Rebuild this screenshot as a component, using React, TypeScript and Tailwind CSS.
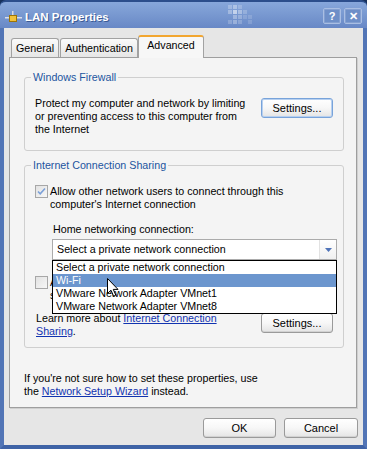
import React from 'react';

const FONT = "font-['Liberation_Sans',Arial,sans-serif]";

function TitleIcon() {
  return (
    <svg width="17" height="12" viewBox="0 0 17 12" className="shrink-0">
      <rect x="7" y="0" width="1.5" height="6" fill="#D5DBE6" />
      <rect x="0" y="6" width="17" height="1.5" fill="#D9DEE8" />
      <rect x="4.5" y="4.5" width="7" height="6" fill="#F2C23A" stroke="#9C7407" strokeWidth="1" />
    </svg>
  );
}

function Watermark() {
  const cells: [number, number, number][] = [
    [0, 0, 0.25], [1, 0, 0.35], [2, 0, 0.2],
    [0, 1, 0.3], [1, 1, 0.55], [2, 1, 0.35], [3, 1, 0.2],
    [1, 2, 0.3], [2, 2, 0.25], [3, 2, 0.15], [4, 2, 0.15],
    [0, 3, 0.2], [1, 3, 0.3], [2, 3, 0.2], [4, 3, 0.15],
  ];
  return (
    <svg width="25" height="20" viewBox="0 0 25 20" className="shrink-0">
      {cells.map(([cx, cy, o], i) => (
        <rect key={i} x={cx * 5} y={cy * 5} width="4" height="4" fill="#ffffff" opacity={o} />
      ))}
    </svg>
  );
}

function CaptionButton({ children }: { children: React.ReactNode }) {
  return (
    <div className="w-[18px] h-[16px] rounded-[2px] border border-[#A9BEE3] bg-[#6E8FC8] flex items-center justify-center text-white font-bold text-[11px] leading-none shadow-[inset_0_0_0_1px_rgba(255,255,255,0.15)]">
      {children}
    </div>
  );
}

function Btn({ children, className = '', focused = false }: { children: React.ReactNode; className?: string; focused?: boolean }) {
  return (
    <div
      className={`h-[20px] shrink-0 rounded-[3px] border bg-linear-to-b from-white via-[#F7F7F7] to-[#E4E4E4] flex items-center justify-center text-black text-[11px] leading-[13px] ${
        focused ? 'border-[#78A3DA] shadow-[inset_0_0_0_1px_#B7D0F0]' : 'border-[#9A9A9A] shadow-[inset_0_-1px_0_#D2D2D2]'
      } ${className}`}
    >
      {children}
    </div>
  );
}

function Check({ checked = false }: { checked?: boolean }) {
  return (
    <div className="w-[13px] h-[13px] shrink-0 border border-[#A7A7A7] bg-linear-to-br from-[#E2E2E2] to-[#F7F7F7] flex items-center justify-center">
      {checked && (
        <svg width="9" height="9" viewBox="0 0 9 9">
          <path d="M1 4.5 L3.2 6.8 L8 1.5" stroke="#7BA0D8" strokeWidth="1.6" fill="none" />
        </svg>
      )}
    </div>
  );
}

function Link({ children }: { children: React.ReactNode }) {
  return <span className="text-[#1133B0] underline">{children}</span>;
}

export default function App() {
  return (
    <div className={`${FONT} w-[367px] h-[449px] overflow-hidden bg-[#16305C] text-black text-[10.7px] leading-[13px]`}>
      {/* Title bar */}
      <div className="h-[28px] rounded-t-[6px] border-t-[2px] border-[#2C4E8C] bg-linear-to-b from-[#87A7DB] via-[#7898D0] to-[#6888C6] flex items-start pl-[5px] pr-[5px]">
        <div className="mt-[9px]">
          <TitleIcon />
        </div>
        <div className="ml-[3px] pt-[8px] text-white font-bold text-[11.5px] leading-[14px] [text-shadow:1px_1px_0_#3A5A95]">
          LAN Properties
        </div>
        <div className="ml-auto mt-[3px] mr-[70px]">
          <Watermark />
        </div>
        <div className="mt-[6px] flex gap-[3px]">
          <CaptionButton>?</CaptionButton>
          <CaptionButton>✕</CaptionButton>
        </div>
      </div>

      {/* Client area */}
      <div className="h-[421px] bg-[#E6E6E6] border-x-[4px] border-b-[4px] border-x-[#5275B6] border-b-[#3F63A6]">
        {/* Tabs */}
        <div className="h-[29px] pt-[7px] pl-[7px] flex items-end relative z-10">
          <div className="w-[48px] h-[19px] rounded-t-[3px] border border-b-0 border-[#A2A2A2] bg-linear-to-b from-[#FAFAFA] to-[#E6E6E6] flex items-center justify-center">
            General
          </div>
          <div className="ml-[1px] w-[78px] h-[19px] rounded-t-[3px] border border-b-0 border-[#A2A2A2] bg-linear-to-b from-[#FAFAFA] to-[#E6E6E6] flex items-center justify-center">
            Authentication
          </div>
          <div className="w-[66px] h-[23px] -mb-[1px] rounded-t-[3px] border border-b-0 border-[#A2A2A2] border-t-2 border-t-[#F2A630] bg-[#F7F7F7] flex items-start justify-center pt-[2px]">
            Advanced
          </div>
        </div>

        {/* Panel */}
        <div className="ml-[5px] w-[348px] h-[351px] border border-[#9E9E9E] bg-[#F4F4F4] shadow-[1px_1px_0_#CFCFCF]">
          <fieldset className="ml-[14px] mt-[13px] w-[320px] rounded-[3px] border border-[#CFCFCF] pb-[14px]">
            <legend className="ml-[6px] px-[2px] text-[#23549F]">Windows Firewall</legend>
            <div className="mt-[13px] pl-[10px] flex items-start">
              <div className="w-[226px] whitespace-nowrap">
                Protect my computer and network by limiting
                <br />
                or preventing access to this computer from
                <br />
                the Internet
              </div>
              <Btn focused className="w-[72px] mt-[1px]">Settings...</Btn>
            </div>
          </fieldset>

          <fieldset className="ml-[14px] mt-[8px] w-[320px] rounded-[3px] border border-[#CFCFCF] pb-[9px]">
            <legend className="ml-[6px] px-[2px] text-[#23549F]">Internet Connection Sharing</legend>
            <div className="mt-[13px] pl-[10px] flex items-start gap-[2px]">
              <Check checked />
              <div className="whitespace-nowrap">
                Allow other network users to connect through this
                <br />
                computer's Internet connection
              </div>
            </div>
            <div className="mt-[12px] pl-[28px]">Home networking connection:</div>
            <div className="relative z-20 mt-[3px] ml-[27px] w-[285px] h-[21px] border border-[#ABABAB] bg-white flex items-center">
              <div className="flex-1 pl-[4px] whitespace-nowrap">Select a private network connection</div>
              <div className="w-[17px] h-full border-l border-[#E2E2E2] bg-linear-to-b from-white to-[#F0F0F0] flex items-center justify-center">
                <svg width="7" height="4" viewBox="0 0 7 4">
                  <path d="M0 0 L7 0 L3.5 4 Z" fill="#4F73B8" />
                </svg>
              </div>

              {/* Open dropdown list */}
              <div className="absolute left-[-1px] top-[20px] w-[285px] border border-black bg-white">
                <div className="h-[13px] pl-[3px] whitespace-nowrap">Select a private network connection</div>
                <div className="h-[13px] pl-[3px] bg-[#6C96CE] text-white whitespace-nowrap">Wi-Fi</div>
                <div className="h-[13px] pl-[3px] whitespace-nowrap">VMware Network Adapter VMnet1</div>
                <div className="h-[13px] pl-[3px] whitespace-nowrap">VMware Network Adapter VMnet8</div>
                <svg
                  className="absolute left-[54px] top-[17px]"
                  width="13"
                  height="20"
                  viewBox="0 0 13 20"
                >
                  <path
                    d="M0.5 0.5 L0.5 15.5 L4 12.2 L6.6 18.2 L8.8 17.2 L6.3 11.4 L11 11.4 Z"
                    fill="#ffffff"
                    stroke="#000000"
                    strokeWidth="1"
                    strokeLinejoin="miter"
                  />
                </svg>
              </div>
            </div>
            <div className="mt-[16px] pl-[10px] flex items-start gap-[2px]">
              <Check />
              <div className="whitespace-nowrap">
                Allow other network users to control or disable the
                <br />
                shared Internet connection
              </div>
            </div>
            <div className="mt-[10px] pl-[11px] flex items-start">
              <div className="w-[225px] whitespace-nowrap">
                Learn more about <Link>Internet Connection</Link>
                <br />
                <Link>Sharing</Link>.
              </div>
              <Btn className="w-[72px] mt-[1px]">Settings...</Btn>
            </div>
          </fieldset>

          <div className="mt-[24px] pl-[14px] whitespace-nowrap">
            If you're not sure how to set these properties, use
            <br />
            the <Link>Network Setup Wizard</Link> instead.
          </div>
        </div>

        {/* Dialog buttons */}
        <div className="mt-[10px] pr-[5px] flex justify-end gap-[8px]">
          <Btn className="w-[73px]">OK</Btn>
          <Btn className="w-[74px]">Cancel</Btn>
        </div>
      </div>
    </div>
  );
}
